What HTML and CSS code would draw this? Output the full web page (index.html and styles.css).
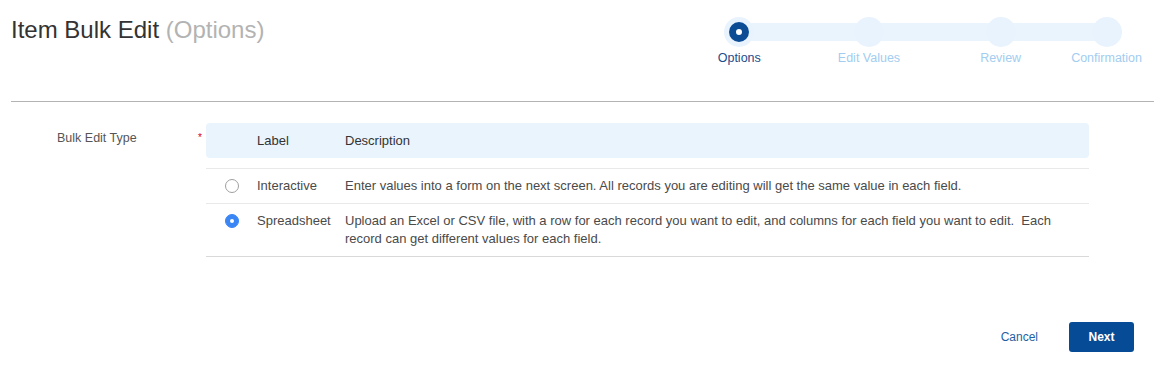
FILE: index.html
```html
<!DOCTYPE html>
<html lang="en">
<head>
    <meta charset="UTF-8">
    <meta name="viewport" content="width=device-width, initial-scale=1.0">
    <title>Item Bulk Edit</title>
    <link rel="stylesheet" href="styles.css">
</head>
<body>
    <div class="page">
        <!-- HEADER -->
        <header class="top">
            <h1>Item Bulk Edit <span class="sub">(Options)</span></h1>
            <ol class="stepper">
                <li class="step active"><span class="dot"></span><span class="step-label">Options</span></li>
                <li class="step"><span class="dot"></span><span class="step-label">Edit Values</span></li>
                <li class="step"><span class="dot"></span><span class="step-label">Review</span></li>
                <li class="step"><span class="dot"></span><span class="step-label">Confirmation</span></li>
            </ol>
        </header>

        <!-- FORM -->
        <main class="form">
            <div class="field">
                <div class="field-label">
                    <span>Bulk Edit Type</span>
                    <span class="req">*</span>
                </div>
                <div class="choice-table">
                    <div class="choice-head">
                        <span></span>
                        <span>Label</span>
                        <span>Description</span>
                    </div>
                    <div class="choice-row">
                        <span class="radio"></span>
                        <span>Interactive</span>
                        <span class="desc">Enter values into a form on the next screen. All records you are editing will get the same value in each field.</span>
                    </div>
                    <div class="choice-row">
                        <span class="radio checked"></span>
                        <span>Spreadsheet</span>
                        <span class="desc">Upload an Excel or CSV file, with a row for each record you want to edit, and columns for each field you want to edit. &nbsp;Each record can get different values for each field.</span>
                    </div>
                </div>
            </div>
        </main>

        <!-- ACTIONS -->
        <footer class="actions">
            <button class="btn-link">Cancel</button>
            <button class="btn-primary">Next</button>
        </footer>
    </div>
</body>
</html>
```

FILE: styles.css
```css
/* Global Styles */
* {
    margin: 0;
    padding: 0;
    box-sizing: border-box;
    font-family: "Liberation Sans", Arial, sans-serif;
}

body {
    background-color: #fff;
    color: #444;
}

.page {
    padding: 0 8px 0 11px;
}

/* Header */
.top {
    display: flex;
    justify-content: space-between;
    align-items: flex-start;
    height: 102px;
    border-bottom: 1px solid #b3b3b3;
}

.top h1 {
    margin-top: 16px;
    font-size: 24px;
    line-height: 28px;
    font-weight: normal;
    color: #333;
}

.top h1 .sub {
    color: #b3b3b3;
}

/* Stepper */
.stepper {
    list-style: none;
    display: flex;
    position: relative;
    margin-top: 17px;
    margin-right: 12px;
}

/* connecting bar behind the circles */
.stepper::before {
    content: "";
    position: absolute;
    top: 6px;
    left: 22px;
    right: 35px;
    height: 18px;
    background-color: #eaf4fd;
}

.step {
    position: relative;
    display: flex;
    flex-direction: column;
    align-items: center;
}

.step + .step {
    margin-left: 77px;
}

.step:nth-child(3) {
    margin-left: 80px;
}

.step:last-child {
    margin-left: 50px;
}

.dot {
    width: 30px;
    height: 30px;
    border-radius: 50%;
    background-color: #e8f3fd;
    display: flex;
    align-items: center;
    justify-content: center;
}

.step.active .dot::after {
    content: "";
    box-sizing: border-box;
    flex: none;
    width: 20px;
    height: 20px;
    border-radius: 50%;
    border: 7px solid #0b4c95;
    background-color: #fff;
}

.step-label {
    margin-top: 4px;
    font-size: 12.5px;
    line-height: 15px;
    color: #a2cdf0;
    white-space: nowrap;
}

.step.active .step-label {
    color: #1c4d8c;
}

/* Form */
.form {
    margin-top: 21px;
}

.field {
    display: flex;
}

.field-label {
    width: 195px;
    display: flex;
    justify-content: space-between;
    padding: 6px 4px 0 46px;
    font-size: 12.5px;
    line-height: 18px;
    color: #555;
}

.req {
    color: #d0021b;
    font-size: 10px;
    line-height: 18px;
}

.choice-table {
    width: 883px;
    font-size: 13px;
}

.choice-head,
.choice-row {
    display: grid;
    grid-template-columns: 51px 88px 1fr;
}

.choice-head {
    height: 35px;
    align-items: center;
    background-color: #eaf4fd;
    border-radius: 4px;
    color: #333;
    margin-bottom: 10px;
}

.choice-row {
    border-top: 1px solid #e9e9e9;
    padding: 8px 0;
    line-height: 18px;
    color: #4a4a4a;
}

.choice-row:last-child {
    border-bottom: 1px solid #d9d9d9;
}

.desc {
    padding-right: 20px;
}

/* Radio buttons */
.radio {
    justify-self: center;
    margin-top: 2px;
    width: 14px;
    height: 14px;
    border-radius: 50%;
    border: 1px solid #a0a0a0;
    background-color: #fff;
    display: flex;
    align-items: center;
    justify-content: center;
}

.radio.checked {
    border-color: #3b86f5;
    background-color: #3b86f5;
}

.radio.checked::after {
    content: "";
    width: 4px;
    height: 4px;
    border-radius: 50%;
    background-color: #fff;
}

/* Actions */
.actions {
    display: flex;
    justify-content: flex-end;
    gap: 15px;
    margin-top: 65px;
    padding-right: 20px;
}

.actions button {
    height: 30px;
    border: none;
    font-size: 12px;
    cursor: pointer;
}

.btn-link {
    background: none;
    color: #1f5fa6;
    padding: 0 16px;
}

.btn-primary {
    width: 65px;
    background-color: #064b96;
    color: #fff;
    font-weight: bold;
    border-radius: 3px;
}

.btn-primary:hover {
    background-color: #053b78;
}
```
